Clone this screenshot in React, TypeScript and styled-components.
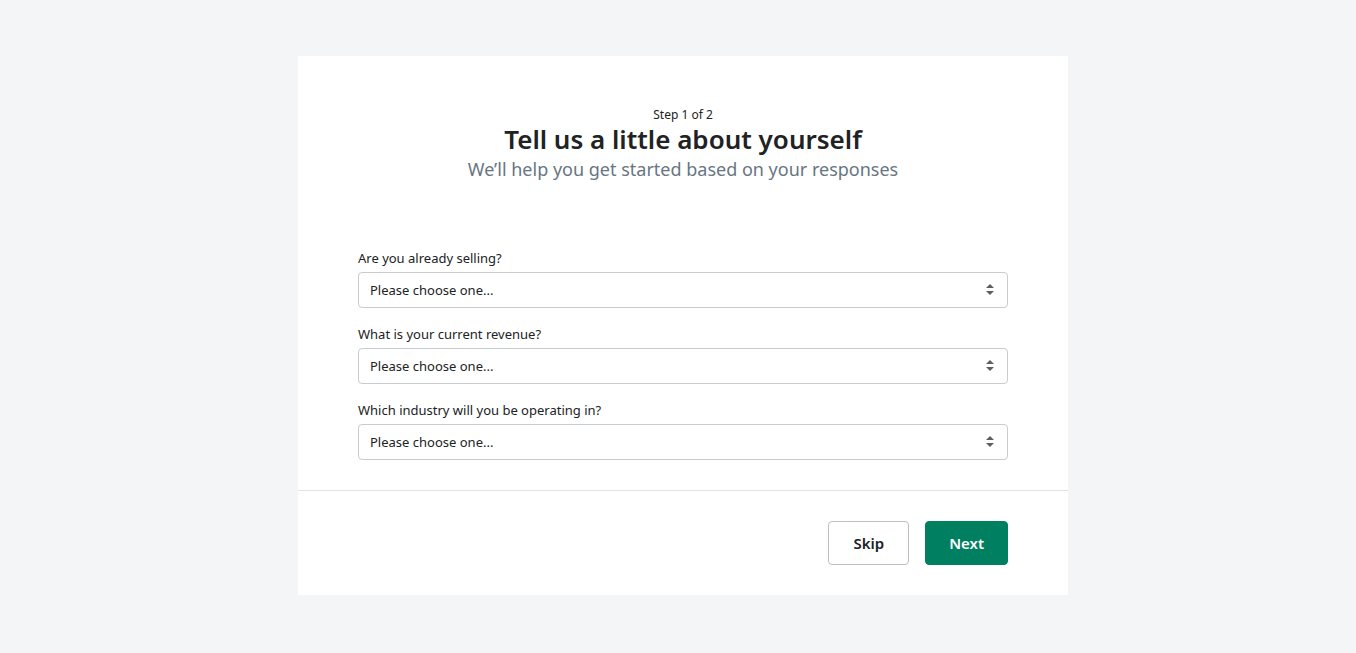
import React, { useState } from "react";
import styled, { createGlobalStyle } from "styled-components";

const GlobalStyle = createGlobalStyle`
  html, body {
    margin: 0;
    padding: 0;
    background: #f4f5f7;
    font-family: "Noto Sans", "Open Sans", sans-serif;
    color: #202223;
  }
`;

const Pagina = styled.div`
  min-height: 653px;
  display: flex;
  justify-content: center;
  padding: 56px 0 0 10px;
  box-sizing: border-box;
`;

const Cartao = styled.div`
  width: 770px;
  height: 539px;
  background: #ffffff;
  display: flex;
  flex-direction: column;
`;

const Corpo = styled.div`
  padding: 51px 60px 30px;
  border-bottom: 1px solid #e1e3e5;
`;

const Cabecalho = styled.div`
  display: flex;
  flex-direction: column;
  align-items: center;
  margin-bottom: 65px;
`;

const Etapa = styled.span`
  font-size: 12px;
  line-height: 16px;
  color: #202223;
`;

const Titulo = styled.h1`
  margin: 0;
  font-size: 26px;
  line-height: 32px;
  font-weight: 600;
  color: #202223;
`;

const Subtitulo = styled.p`
  margin: 0;
  font-size: 18px;
  line-height: 28px;
  color: #687582;
`;

const Campos = styled.div`
  display: flex;
  flex-direction: column;
  gap: 16px;
`;

const Grupo = styled.label`
  display: flex;
  flex-direction: column;
  gap: 4px;
`;

const Rotulo = styled.span`
  font-size: 13px;
  line-height: 20px;
  color: #202223;
`;

const CaixaSelecao = styled.div`
  position: relative;
`;

const Selecao = styled.select`
  appearance: none;
  width: 100%;
  height: 36px;
  padding: 0 36px 0 11px;
  border: 1px solid #c9cccf;
  border-radius: 4px;
  background: #ffffff;
  font-family: inherit;
  font-size: 13px;
  color: #202223;
  outline: none;
`;

const Seta = styled.svg`
  position: absolute;
  right: 14px;
  top: 12px;
  pointer-events: none;
`;

const Rodape = styled.div`
  flex: 1;
  display: flex;
  justify-content: flex-end;
  align-items: flex-start;
  gap: 16px;
  padding: 30px 60px;
`;

interface PropsBotao {
  $primario?: boolean;
}

const Botao = styled.button<PropsBotao>`
  height: 44px;
  padding: 0 ${({ $primario }) => ($primario ? "23px" : "24px")};
  border-radius: 4px;
  border: 1px solid ${({ $primario }) => ($primario ? "#008060" : "#babfc3")};
  background: ${({ $primario }) => ($primario ? "#008060" : "#ffffff")};
  color: ${({ $primario }) => ($primario ? "#ffffff" : "#202223")};
  font-family: inherit;
  font-size: 15px;
  font-weight: 600;
  cursor: pointer;
`;

const perguntas = [
  "Are you already selling?",
  "What is your current revenue?",
  "Which industry will you be operating in?",
];

function Campo({ rotulo }: { rotulo: string }) {
  const [valor, setValor] = useState("");
  return (
    <Grupo>
      <Rotulo>{rotulo}</Rotulo>
      <CaixaSelecao>
        <Selecao value={valor} onChange={(e) => setValor(e.target.value)}>
          <option value="">Please choose one...</option>
        </Selecao>
        <Seta width="8" height="11" viewBox="0 0 8 11">
          <path d="M4 0 L8 4 L0 4 Z M4 11 L8 7 L0 7 Z" fill="#5c5f62" />
        </Seta>
      </CaixaSelecao>
    </Grupo>
  );
}

export default function App() {
  return (
    <>
      <GlobalStyle />
      <Pagina>
        <Cartao>
          <Corpo>
            <Cabecalho>
              <Etapa>Step 1 of 2</Etapa>
              <Titulo>Tell us a little about yourself</Titulo>
              <Subtitulo>We’ll help you get started based on your responses</Subtitulo>
            </Cabecalho>
            <Campos>
              {perguntas.map((p) => (
                <Campo key={p} rotulo={p} />
              ))}
            </Campos>
          </Corpo>
          <Rodape>
            <Botao>Skip</Botao>
            <Botao $primario>Next</Botao>
          </Rodape>
        </Cartao>
      </Pagina>
    </>
  );
}
